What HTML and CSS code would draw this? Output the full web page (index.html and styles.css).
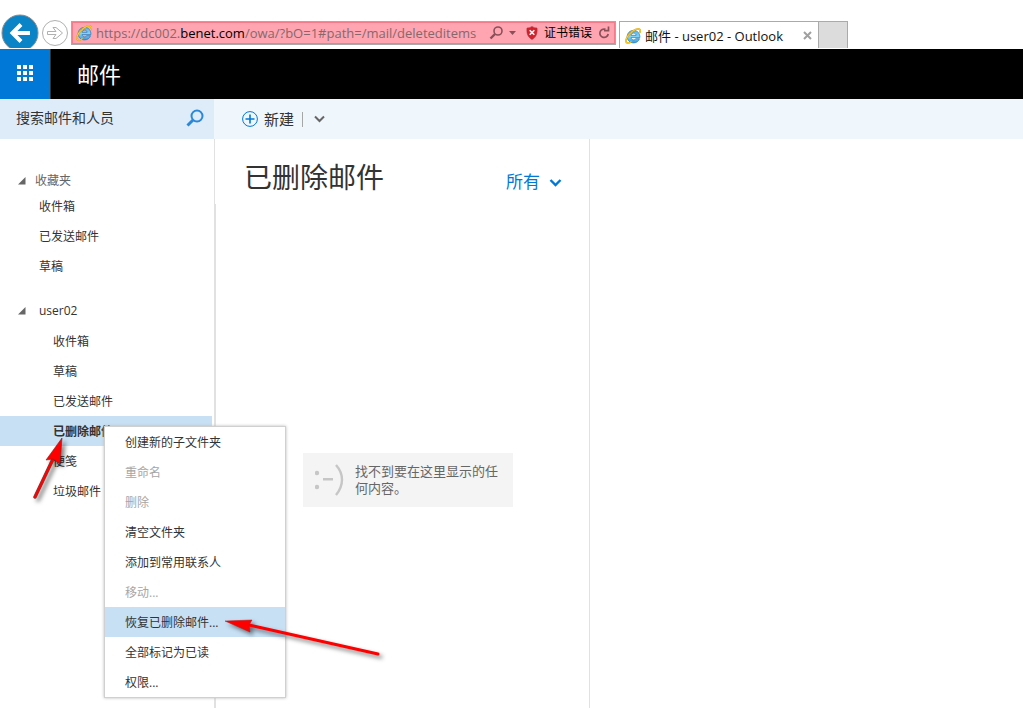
FILE: index.html
```html
<!DOCTYPE html>
<html lang="zh-CN">
<head>
<meta charset="utf-8">
<title>邮件 - user02 - Outlook</title>
<link rel="stylesheet" href="styles.css">
</head>
<body>
<svg class="defs" aria-hidden="true">
  <defs>
    <linearGradient id="ie-blue" x1="0" y1="0" x2="0" y2="1">
      <stop offset="0" stop-color="#55b4e8"/><stop offset=".5" stop-color="#7fd4f8"/><stop offset="1" stop-color="#3a9ad8"/>
    </linearGradient>
    <symbol id="ie" viewBox="0 0 16 16">
      <path d="M14.900 9.600H6c.3 1.500 1.300 2.300 2.600 2.300 1 0 1.700-.4 2.200-1.200h3.700c-.8 2.500-3 4.200-5.900 4.200-3.700 0-6.400-2.600-6.400-6.200C2.200 5 4.900 2.400 8.600 2.400c3.900 0 6.500 2.900 6.300 7.200zM6.100 7.300h5c-.2-1.400-1.100-2.200-2.400-2.200-1.400 0-2.300.8-2.600 2.200z" fill="url(#ie-blue)" fill-rule="evenodd" stroke="#1f78b8" stroke-width=".7"/>
      <path d="M14.600 5C15.800 2.400 15.300.9 13.200.9 9.800.9 4.600 5 2.200 9.200.4 12.400.5 15 2.600 15c1.200 0 2.500-.5 3.800-1.400" fill="none" stroke="#d99c12" stroke-width="1.700"/>
      <path d="M14.600 5C15.800 2.400 15.300.9 13.200.9 9.800.9 4.600 5 2.200 9.200.4 12.400.5 15 2.600 15c1.200 0 2.500-.5 3.800-1.400" fill="none" stroke="#ffd83a" stroke-width="1"/>
    </symbol>
  </defs>
</svg>

<div class="browser">
  <button class="back" aria-label="后退">
    <svg width="38" height="38" viewBox="0 0 38 38"><circle cx="19" cy="19" r="18" fill="#0a84c6" stroke="#8c8c8c"/><path d="M29 19H12M20 10.500 11.500 19l8.500 8.500" fill="none" stroke="#fff" stroke-width="4"/></svg>
  </button>
  <button class="forward" aria-label="前进">
    <svg width="28" height="28" viewBox="0 0 28 28"><circle cx="14" cy="14" r="12.500" fill="#fff" stroke="#b0b0b0"/><path d="M6.500 12.500h8.500L12 8.500h3l6.500 5.500-6.500 5.500h-3l3-4H6.500z" fill="#fff" stroke="#b0b0b0"/></svg>
  </button>
  <div class="address">
    <svg class="ie-icon"><use href="#ie"/></svg>
    <div class="url" role="textbox" aria-label="地址">https://dc002.<span class="domain">benet.com</span>/owa/?bO=1#path=/mail/deleteditems</div>
    <button class="find" aria-label="搜索">
      <svg width="28" height="14" viewBox="0 0 28 14"><circle cx="9" cy="5" r="4" fill="none" stroke="#8a5058" stroke-width="1.600"/><path d="M6 8 1.500 12.500" stroke="#8a5058" stroke-width="2.400"/><path d="M20 5h7l-3.500 4z" fill="#8a5058"/></svg>
    </button>
    <button class="cert">
      <svg width="12" height="14" viewBox="0 0 12 14"><path d="M6 .5C7.500 1.500 9 2 11 2c.5 5-.5 9-5 11.500C1.500 11 .5 7 1 2c2 0 3.500-.5 5-1.500z" fill="#d3202b" stroke="#a8323a" stroke-width=".6"/><path d="m3.700 4.200 4.600 4.600m0-4.600L3.700 8.800" stroke="#fff" stroke-width="1.600"/></svg>
      <span>证书错误</span>
    </button>
    <button class="reload" aria-label="刷新">
      <svg width="12" height="14" viewBox="0 0 12 14"><path d="M7.500 3.300A4.200 4.200 0 1 0 10.200 8" fill="none" stroke="#8a5058" stroke-width="1.700"/><path d="M6 4.700h4.500V.5" fill="none" stroke="#8a5058" stroke-width="1.700"/></svg>
    </button>
  </div>
  <div class="tab">
    <svg class="ie-icon"><use href="#ie"/></svg>
    <span class="tab-title">邮件 - user02 - Outlook</span>
    <button class="close" aria-label="关闭">
      <svg width="9" height="9" viewBox="0 0 9 9"><path d="m1 1 7 7m0-7L1 8" stroke="#a0a0a0" stroke-width="2"/></svg>
    </button>
  </div>
  <button class="new-tab" aria-label="新建选项卡"></button>
</div>

<header class="banner">
  <button class="launcher" aria-label="应用">
    <svg width="16" height="16" viewBox="0 0 16 16" fill="#fff"><path d="M0 0h4v4H0zM6 0h4v4H6zM12 0h4v4h-4zM0 6h4v4H0zM6 6h4v4H6zM12 6h4v4h-4zM0 12h4v4H0zM6 12h4v4H6zM12 12h4v4h-4z"/></svg>
  </button>
  <h1 class="app-name">邮件</h1>
</header>

<div class="toolbar">
  <form class="search">
    <input class="search-box" type="text" aria-label="搜索邮件和人员" placeholder="搜索邮件和人员">
    <button class="search-go" type="button" aria-label="搜索">
      <svg width="18" height="18" viewBox="0 0 18 18" fill="none" stroke="#2b88d8"><circle cx="11" cy="7" r="5.500" stroke-width="2"/><path d="m7 11-5.500 5.500" stroke-width="3"/></svg>
    </button>
  </form>
  <button class="new">
    <svg width="16" height="16" viewBox="0 0 16 16" fill="none" stroke="#0078d7"><circle cx="8" cy="8" r="7.400"/><path d="M8 3.500v9M3.500 8h9" stroke-width="1.600"/></svg>
    <span>新建</span>
  </button>
  <span class="divider"></span>
  <button class="more" aria-label="更多">
    <svg width="11" height="8" viewBox="0 0 11 8"><path d="M1 1.500 5.500 6 10 1.500" fill="none" stroke="#666" stroke-width="2"/></svg>
  </button>
</div>

<main class="content">
  <nav class="sidebar">
    <button class="group favorites">
      <svg width="8" height="8" viewBox="0 0 8 8"><path d="M7.500 0v7.500H0z" fill="#666"/></svg>
      <span>收藏夹</span>
    </button>
    <ul class="folders">
      <li><a class="folder" href="#">收件箱</a></li>
      <li><a class="folder" href="#">已发送邮件</a></li>
      <li><a class="folder" href="#">草稿</a></li>
    </ul>
    <button class="group account">
      <svg width="8" height="8" viewBox="0 0 8 8"><path d="M7.500 0v7.500H0z" fill="#666"/></svg>
      <span>user02</span>
    </button>
    <ul class="folders nested">
      <li><a class="folder" href="#">收件箱</a></li>
      <li><a class="folder" href="#">草稿</a></li>
      <li><a class="folder" href="#">已发送邮件</a></li>
      <li><a class="folder selected" href="#">已删除邮件</a></li>
      <li><a class="folder" href="#">便笺</a></li>
      <li><a class="folder" href="#">垃圾邮件</a></li>
    </ul>
  </nav>
  <div class="splitter"></div>
  <section class="list">
    <div class="list-head">
      <h2 class="list-title">已删除邮件</h2>
      <button class="filter">
        <span>所有</span>
        <svg width="13" height="10" viewBox="0 0 13 10"><path d="M1.500 3 6.500 8l5-5" fill="none" stroke="#0078d7" stroke-width="2.400"/></svg>
      </button>
    </div>
    <div class="empty">
      <svg width="30" height="32" viewBox="0 0 30 32" fill="#c6c6c6"><circle cx="2" cy="9" r="2.200"/><circle cx="2" cy="23" r="2.200"/><path d="M8 14h10v2.500H8z"/><path d="M21 1c8 9 8 20 0 30" fill="none" stroke="#c6c6c6" stroke-width="2.400"/></svg>
      <p class="empty-text">找不到要在这里显示的任何内容。</p>
    </div>
  </section>
  <section class="reading"></section>
</main>

<div class="menu" role="menu">
  <button class="item" role="menuitem">创建新的子文件夹</button>
  <button class="item" role="menuitem" disabled>重命名</button>
  <button class="item" role="menuitem" disabled>删除</button>
  <button class="item" role="menuitem">清空文件夹</button>
  <button class="item" role="menuitem">添加到常用联系人</button>
  <button class="item" role="menuitem" disabled>移动...</button>
  <button class="item active" role="menuitem">恢复已删除邮件...</button>
  <button class="item" role="menuitem">全部标记为已读</button>
  <button class="item" role="menuitem">权限...</button>
</div>

<svg class="pointer pointer-folder" width="46" height="76" viewBox="0 0 46 76" aria-hidden="true">
  <path d="M5 67 23 29" stroke="#555" stroke-width="3.500" stroke-linecap="round"/>
  <path d="M5 67 23 29" stroke="#f00" stroke-width="2.500" stroke-linecap="round"/>
  <path d="M32 8 16 30l7-1 7 5z" fill="#f00" stroke="#7a2020" stroke-width=".6"/>
</svg>
<svg class="pointer pointer-item" width="170" height="54" viewBox="0 0 170 54" aria-hidden="true">
  <path d="M24 13 153 42" stroke="#f00" stroke-width="3" stroke-linecap="round"/>
  <path d="m0 9 27-1-3 5 1 7z" fill="#f00" stroke="#a02020" stroke-width=".5"/>
</svg>
</body>
</html>
```

FILE: styles.css
```css
* { box-sizing: border-box; }
html, body { height: 100%; }
body {
  margin: 0;
  position: relative;
  display: flex;
  flex-direction: column;
  overflow: hidden;
  background: #fff;
  color: #333;
  font: 12px/18px "Open Sans", "Noto Sans CJK SC", sans-serif;
}
button, input { font: inherit; color: inherit; border: 0; background: none; padding: 0; margin: 0; }
button { display: flex; align-items: center; flex: none; text-align: left; }
svg { display: block; flex: none; }
ul { list-style: none; margin: 0; padding: 0; }
h1, h2, p { margin: 0; font-weight: 400; }
.defs { position: absolute; width: 0; height: 0; }

.browser { display: flex; align-items: flex-end; flex: none; height: 49px; border-bottom: 1px solid #fff; overflow: hidden; }
.back { margin: 0 3px -4px 1px; }
.forward { margin: 0 2px 1px 0; }
.forward svg { margin-left: -1px; }
.address {
  display: flex;
  align-items: center;
  flex: 0 0 545px;
  height: 24px;
  margin-bottom: 3px;
  padding: 0 5px 0 4px;
  background: #ffa5b1;
  border: 1px solid #aaa;
  box-shadow: inset 0 0 0 1px #f77a8a;
}
.ie-icon { width: 16px; height: 16px; }
.url { flex: 1; margin-left: 4px; font-size: 13px; color: #86686c; white-space: nowrap; }
.domain { color: #000; }
.find { margin-right: 9px; }
.cert { gap: 6px; margin-right: 6px; color: #000; }
.tab {
  display: flex;
  align-items: center;
  flex: 0 0 200px;
  height: 27px;
  margin-left: 3px;
  padding: 1px 6px 0 5px;
  border: 1px solid #aaa;
  border-bottom: 0;
  color: #111;
}
.tab-title { flex: 1; margin-left: 4px; font-size: 13px; white-space: nowrap; }
.new-tab { width: 29px; height: 27px; background: #dcdcdc; border: 1px solid #aaa; border-width: 1px 1px 0 0; }

.banner { display: flex; align-items: center; flex: none; height: 50px; background: #000; color: #fff; }
.launcher { justify-content: center; width: 51px; height: 50px; padding-bottom: 2px; background: #0078d7; border-right: 1px solid #333; }
.app-name { margin-left: 26px; font-size: 22px; line-height: 32px; }

.toolbar { display: flex; align-items: center; flex: none; height: 40px; background: #eff6fc; }
.search { display: flex; align-items: center; flex: none; width: 214px; min-width: 0; height: 40px; margin: 0; padding: 0 10px 2px 16px; background: #deecf9; }
.search-box { flex: 1; width: 0; min-width: 0; font-size: 14px; outline: 0; }
.search-box::placeholder { color: #333; opacity: 1; }
.new { gap: 6px; margin-left: 28px; font-size: 15px; }
.divider { width: 1px; height: 15px; margin: 0 11px 0 8px; background: #a6a6a6; }

.content { display: flex; flex: 1; min-height: 0; }
.sidebar { flex: 0 0 215px; padding: 32px 2px 0 0; border-right: 1px solid #e1e1e1; }
.splitter { flex: 0 0 1px; margin-top: 65px; background: #e1e1e1; }
.group { padding-left: 18px; }
.favorites { gap: 9px; height: 20px; color: #666; }
.account { gap: 13px; height: 30px; margin-top: 15px; }
.folder { display: block; height: 30px; padding-left: 39px; line-height: 32px; color: #333; text-decoration: none; }
.nested .folder { padding-left: 53px; }
.folder.selected { background: #c7e0f4; font-weight: 700; }
.list { flex: 0 0 374px; padding: 18px 27px 0 28px; border-right: 1px solid #e1e1e1; }
.list-head { display: flex; justify-content: space-between; align-items: center; }
.list-title { font-size: 28px; line-height: 40px; }
.filter { gap: 9px; margin-top: 10px; font-size: 17px; color: #0078d7; }
.empty { display: flex; align-items: center; gap: 10px; width: 210px; height: 54px; margin: 256px 0 0 59px; padding: 0 12px; background: #f4f4f4; }
.empty-text { font-size: 13px; line-height: 17px; color: #666; }
.reading { flex: 1; }

.menu { position: absolute; left: 104px; top: 426px; width: 182px; border: 1px solid #d0d0d0; background: #fff; box-shadow: 0 0 3px #bbb; }
.item { width: 100%; height: 30px; padding: 2px 0 0 20px; }
.item:disabled { color: #a6a6a6; }
.item.active { background: #c7e0f4; }

.pointer { position: absolute; filter: drop-shadow(3px 3px 2px rgba(0, 0, 0, .5)); }
.pointer-folder { left: 30px; top: 430px; }
.pointer-item { left: 225px; top: 612px; }
```
